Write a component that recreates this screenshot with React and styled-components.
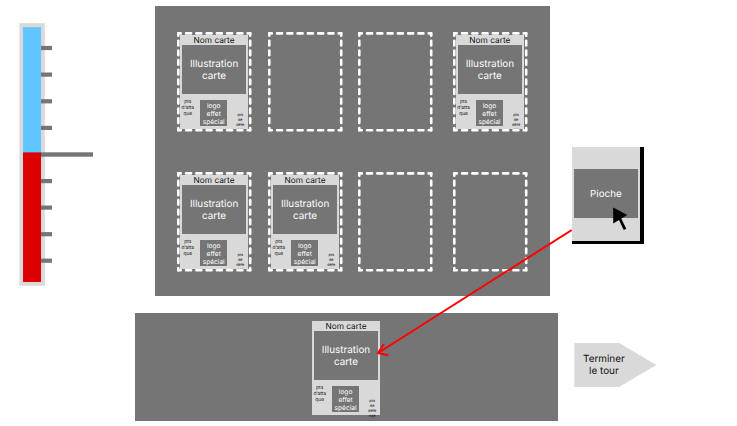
import React from 'react';
import styled, { createGlobalStyle } from 'styled-components';

const GRAY = '#757575';
const LIGHT = '#d9d9d9';

const GlobalStyle = createGlobalStyle`
  * { box-sizing: border-box; }
  body {
    margin: 0;
    background: #fff;
    font-family: Inter, "Liberation Sans", sans-serif;
    text-rendering: geometricPrecision;
  }
`;

const Page = styled.main`
  position: relative;
  display: flex;
  width: 737px;
  height: 426px;
  overflow: hidden;
`;

const GaugeColumn = styled.aside`
  width: 135px;
  flex: none;
  padding: 23px 0 0 19px;
`;

const GaugeSvg = styled.svg`
  display: block;
`;

const Center = styled.section`
  width: 423px;
  flex: none;
  display: flex;
  flex-direction: column;
  align-items: flex-start;
  gap: 17px;
  padding-top: 5.5px;
`;

const Board = styled.div`
  display: grid;
  grid-template-columns: 91px 90.2px 94.6px 75px;
  grid-template-rows: 140px 100px;
  width: 395px;
  height: 290.5px;
  margin-left: 20.3px;
  padding: 26.4px 0 0 21.7px;
  background: ${GRAY};
`;

const SlotBox = styled.div`
  position: relative;
  width: 75px;
  height: 100px;
  padding: 3.1px 2.8px;
`;

const DashFrame = styled.svg`
  position: absolute;
  inset: 0;
`;

const Hand = styled.div`
  display: flex;
  width: 423px;
  height: 107.6px;
  padding: 8px 0 0 176.7px;
  background: ${GRAY};
`;

const CardBox = styled.article`
  display: flex;
  flex-direction: column;
  width: 68.6px;
  height: 94px;
  padding: 0 2px;
  background: ${LIGHT};
  color: #111;
`;

const CardTitle = styled.h2`
  margin: 0;
  height: 10.2px;
  font-size: 8.3px;
  font-weight: 400;
  line-height: 13px;
  text-align: center;
  white-space: nowrap;
`;

const Illustration = styled.div`
  display: flex;
  align-items: center;
  justify-content: center;
  height: 49px;
  flex: none;
  padding-top: 1px;
  background: ${GRAY};
  color: #fff;
  font-size: 9.9px;
  line-height: 12px;
  text-align: center;
`;

const CardFooter = styled.div`
  display: flex;
  align-items: flex-start;
  height: 34px;
`;

const Attack = styled.div`
  width: 14px;
  margin: 4.8px 5.4px 0 -1px;
  font-size: 4.9px;
  line-height: 6px;
  text-align: center;
`;

const Effect = styled.div`
  width: 27px;
  height: 26px;
  margin-top: 6.2px;
  padding-top: 2.8px;
  background: ${GRAY};
  color: #fff;
  font-size: 6.6px;
  line-height: 7.8px;
  text-align: center;
`;

const Defense = styled.div`
  width: 12px;
  margin: 19.3px 0 0 7.1px;
  font-size: 3.9px;
  line-height: 4.8px;
  text-align: center;
`;

const Actions = styled.aside`
  display: flex;
  flex-direction: column;
  align-items: flex-start;
  gap: 98.7px;
  padding: 147px 0 0 13.6px;
`;

const DrawPile = styled.button`
  position: relative;
  display: flex;
  align-items: center;
  width: 72px;
  height: 97px;
  padding: 0 1.5px 1.5px 2px;
  border: 0 solid #000;
  border-width: 0 4px 3px 0;
  background: ${LIGHT};
  font-family: inherit;
  text-rendering: inherit;
`;

const PileLabel = styled.span`
  display: flex;
  align-items: center;
  justify-content: center;
  width: 100%;
  height: 49px;
  padding-top: 1.5px;
  background: ${GRAY};
  color: #fff;
  font-size: 9.8px;
`;

const Pointer = styled.svg`
  position: absolute;
  left: 40px;
  top: 60px;
`;

const EndTurn = styled.button`
  display: flex;
  align-items: center;
  justify-content: center;
  width: 82px;
  height: 44.5px;
  margin-left: 2.8px;
  padding: 2px 23px 0 0;
  border: 0;
  background: ${LIGHT};
  clip-path: polygon(0 0, 54% 0, 100% 50%, 54% 100%, 0 100%);
  color: #111;
  font-family: inherit;
  font-size: 9.9px;
  line-height: 11.8px;
  text-rendering: inherit;
`;

const DrawArrow = styled.svg`
  position: absolute;
  left: 370px;
  top: 225px;
  pointer-events: none;
`;

const TICKS = [25, 51.6, 78.3, 104.9, 158.1, 184.6, 211.2, 237.7];

function Gauge() {
  return (
    <GaugeSvg width="80" height="264" viewBox="0 0 80 264">
      <rect x="0.4" y="0.2" width="25.4" height="262.5" fill={LIGHT} />
      <rect x="4" y="4.2" width="18" height="126" fill="#61c5ff" />
      <rect x="4" y="129.4" width="18" height="129.6" fill="#de0000" />
      {TICKS.map((y) => (
        <rect key={y} x="22" y={y - 2.1} width="11" height="4.2" fill={GRAY} />
      ))}
      <rect x="22" y="129.3" width="52" height="4.4" fill={GRAY} />
    </GaugeSvg>
  );
}

function Slot({ children }) {
  return (
    <SlotBox>
      {children}
      <DashFrame width="75" height="100" viewBox="0 0 75 100">
        <rect x="1.3" y="1.4" width="71.9" height="96.9" fill="none" stroke={GRAY} strokeWidth="2.6" />
        <g fill="none" stroke="#fff" strokeWidth="2.6" strokeLinecap="round">
          <path d="M1.3 1.4H73.2M1.3 98.3H73.2" strokeDasharray="5 5.27" strokeDashoffset="2.5" />
          <path d="M1.3 1.4V98.3M73.2 1.4V98.3" strokeDasharray="4.7 4.99" strokeDashoffset="2.35" />
        </g>
      </DashFrame>
    </SlotBox>
  );
}

function Card() {
  return (
    <CardBox>
      <CardTitle>Nom carte</CardTitle>
      <Illustration>Illustration<br />carte</Illustration>
      <CardFooter>
        <Attack>pts<br />d’atta<br />que</Attack>
        <Effect>logo<br />effet<br />spécial</Effect>
        <Defense>pts<br />de<br />défe<br />nse</Defense>
      </CardFooter>
    </CardBox>
  );
}

const SLOTS = [true, false, false, true, true, true, false, false];

export default function App() {
  return (
    <>
      <GlobalStyle />
      <Page>
        <GaugeColumn><Gauge /></GaugeColumn>
        <Center>
          <Board>
            {SLOTS.map((filled, i) => (
              <Slot key={i}>{filled && <Card />}</Slot>
            ))}
          </Board>
          <Hand><Card /></Hand>
        </Center>
        <Actions>
          <DrawPile>
            <PileLabel>Pioche</PileLabel>
            <Pointer width="18" height="26" viewBox="0 0 18 26">
              <path d="M1.2 0.5L15.2 8L1.2 16.5Z" />
              <path d="M7 10L13 22.3" stroke="#000" strokeWidth="2.8" />
            </Pointer>
          </DrawPile>
          <EndTurn>Terminer<br />le tour</EndTurn>
        </Actions>
        <DrawArrow width="202" height="136" viewBox="0 0 202 136">
          <path d="M201.7 5L8 128M14 119L8 128L18.2 130.3" fill="none" stroke="#f00" strokeWidth="2" />
        </DrawArrow>
      </Page>
    </>
  );
}
